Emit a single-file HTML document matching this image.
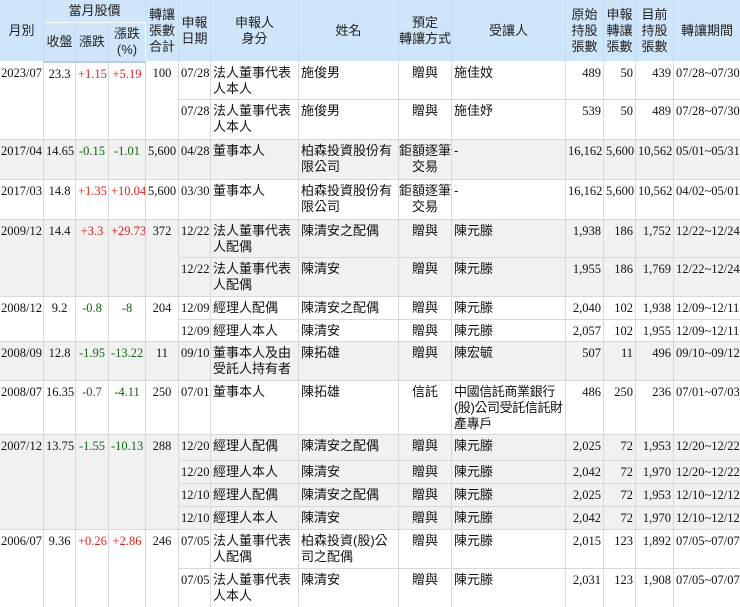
<!DOCTYPE html>
<html><head><meta charset="utf-8"><style>
html,body{margin:0;padding:0;background:#fff;width:740px;height:607px;overflow:hidden}
table{border-collapse:collapse;table-layout:fixed;width:741px;font-family:"Liberation Serif","Noto Sans CJK TC",serif;font-size:12.5px;color:#111;margin-top:-1px;margin-left:-1px}
td,th{border:1px solid #d8d8d8;padding:3px 2px 0 2px;line-height:16px;vertical-align:top;overflow:hidden;white-space:nowrap}
td.l{padding-left:1px;padding-right:0}
th{background:#cfe5fa;font-family:"Liberation Sans","Noto Sans CJK TC",sans-serif;font-size:13px;font-weight:normal;vertical-align:middle;text-align:center;border-color:#fff #c8daea #fff #fff;padding:0;color:#222}
thead tr:last-child th{border-bottom:2px solid #b8cde0}
.c{text-align:center}.r{text-align:right}.l{text-align:left}
.s{font-family:"Liberation Sans","Noto Sans CJK TC",sans-serif;font-size:13px;white-space:normal}
td.c.s{padding-left:0;padding-right:0}
td.nw{white-space:nowrap;letter-spacing:-0.4px}
.up{color:#d22}.dn{color:#161}
.g td{background:#f1f1f1}
</style></head><body>
<table>
<colgroup><col style="width:44px"><col style="width:32px"><col style="width:33px"><col style="width:37px"><col style="width:33px"><col style="width:32px"><col style="width:88px"><col style="width:100px"><col style="width:53px"><col style="width:114px"><col style="width:38px"><col style="width:32px"><col style="width:38px"><col style="width:67px"></colgroup>
<thead>
<tr style="height:23px"><th rowspan="2">月別</th><th colspan="3">當月股價</th><th rowspan="2">轉讓<br>張數<br>合計</th><th rowspan="2">申報<br>日期</th><th rowspan="2">申報人<br>身分</th><th rowspan="2">姓名</th><th rowspan="2">預定<br>轉讓方式</th><th rowspan="2">受讓人</th><th rowspan="2">原始<br>持股<br>張數</th><th rowspan="2">申報<br>轉讓<br>張數</th><th rowspan="2">目前<br>持股<br>張數</th><th rowspan="2">轉讓期間</th></tr>
<tr style="height:39px"><th>收盤</th><th>漲跌</th><th>漲跌<br>(%)</th></tr>
</thead>
<tbody>
<tr style="height:38px"><td rowspan="2" class="l">2023/07</td><td rowspan="2" class="c">23.3</td><td rowspan="2" class="c up">+1.15</td><td rowspan="2" class="c up">+5.19</td><td rowspan="2" class="c">100</td><td>07/28</td><td class="s">法人董事代表人本人</td><td class="s">施俊男</td><td class="s c">贈與</td><td class="s">施佳妏</td><td class="r">489</td><td class="r">50</td><td class="r">439</td><td class="r">07/28~07/30</td></tr>
<tr style="height:40px"><td>07/28</td><td class="s">法人董事代表人本人</td><td class="s">施俊男</td><td class="s c">贈與</td><td class="s">施佳妤</td><td class="r">539</td><td class="r">50</td><td class="r">489</td><td class="r">07/28~07/30</td></tr>
<tr class="g" style="height:40px"><td class="l">2017/04</td><td class="c">14.65</td><td class="c dn">-0.15</td><td class="c dn">-1.01</td><td class="c">5,600</td><td>04/28</td><td class="s">董事本人</td><td class="s">柏森投資股份有限公司</td><td class="s c">鉅額逐筆<br>交易</td><td class="s">-</td><td class="r">16,162</td><td class="r">5,600</td><td class="r">10,562</td><td class="r">05/01~05/31</td></tr>
<tr style="height:40px"><td class="l">2017/03</td><td class="c">14.8</td><td class="c up">+1.35</td><td class="c up">+10.04</td><td class="c">5,600</td><td>03/30</td><td class="s">董事本人</td><td class="s">柏森投資股份有限公司</td><td class="s c">鉅額逐筆<br>交易</td><td class="s">-</td><td class="r">16,162</td><td class="r">5,600</td><td class="r">10,562</td><td class="r">04/02~05/01</td></tr>
<tr class="g" style="height:38px"><td rowspan="2" class="l">2009/12</td><td rowspan="2" class="c">14.4</td><td rowspan="2" class="c up">+3.3</td><td rowspan="2" class="c up">+29.73</td><td rowspan="2" class="c">372</td><td>12/22</td><td class="s">法人董事代表人配偶</td><td class="s">陳清安之配偶</td><td class="s c">贈與</td><td class="s">陳元滕</td><td class="r">1,938</td><td class="r">186</td><td class="r">1,752</td><td class="r">12/22~12/24</td></tr>
<tr class="g" style="height:39px"><td>12/22</td><td class="s">法人董事代表人配偶</td><td class="s">陳清安</td><td class="s c">贈與</td><td class="s">陳元滕</td><td class="r">1,955</td><td class="r">186</td><td class="r">1,769</td><td class="r">12/22~12/24</td></tr>
<tr style="height:23px"><td rowspan="2" class="l">2008/12</td><td rowspan="2" class="c">9.2</td><td rowspan="2" class="c dn">-0.8</td><td rowspan="2" class="c dn">-8</td><td rowspan="2" class="c">204</td><td>12/09</td><td class="s">經理人配偶</td><td class="s">陳清安之配偶</td><td class="s c">贈與</td><td class="s">陳元滕</td><td class="r">2,040</td><td class="r">102</td><td class="r">1,938</td><td class="r">12/09~12/11</td></tr>
<tr style="height:22px"><td>12/09</td><td class="s">經理人本人</td><td class="s">陳清安</td><td class="s c">贈與</td><td class="s">陳元滕</td><td class="r">2,057</td><td class="r">102</td><td class="r">1,955</td><td class="r">12/09~12/11</td></tr>
<tr class="g" style="height:39px"><td class="l">2008/09</td><td class="c">12.8</td><td class="c dn">-1.95</td><td class="c dn">-13.22</td><td class="c">11</td><td>09/10</td><td class="s">董事本人及由受託人持有者</td><td class="s">陳拓雄</td><td class="s c">贈與</td><td class="s">陳宏毓</td><td class="r">507</td><td class="r">11</td><td class="r">496</td><td class="r">09/10~09/12</td></tr>
<tr style="height:54px"><td class="l">2008/07</td><td class="c">16.35</td><td class="c dn">-0.7</td><td class="c dn">-4.11</td><td class="c">250</td><td>07/01</td><td class="s">董事本人</td><td class="s">陳拓雄</td><td class="s c">信託</td><td class="s nw">中國信託商業銀行<br>(股)公司受託信託財<br>產專戶</td><td class="r">486</td><td class="r">250</td><td class="r">236</td><td class="r">07/01~07/03</td></tr>
<tr class="g" style="height:26px"><td rowspan="4" class="l">2007/12</td><td rowspan="4" class="c">13.75</td><td rowspan="4" class="c dn">-1.55</td><td rowspan="4" class="c dn">-10.13</td><td rowspan="4" class="c">288</td><td>12/20</td><td class="s">經理人配偶</td><td class="s">陳清安之配偶</td><td class="s c">贈與</td><td class="s">陳元滕</td><td class="r">2,025</td><td class="r">72</td><td class="r">1,953</td><td class="r">12/20~12/22</td></tr>
<tr class="g" style="height:23px"><td>12/20</td><td class="s">經理人本人</td><td class="s">陳清安</td><td class="s c">贈與</td><td class="s">陳元滕</td><td class="r">2,042</td><td class="r">72</td><td class="r">1,970</td><td class="r">12/20~12/22</td></tr>
<tr class="g" style="height:23px"><td>12/10</td><td class="s">經理人配偶</td><td class="s">陳清安之配偶</td><td class="s c">贈與</td><td class="s">陳元滕</td><td class="r">2,025</td><td class="r">72</td><td class="r">1,953</td><td class="r">12/10~12/12</td></tr>
<tr class="g" style="height:23px"><td>12/10</td><td class="s">經理人本人</td><td class="s">陳清安</td><td class="s c">贈與</td><td class="s">陳元滕</td><td class="r">2,042</td><td class="r">72</td><td class="r">1,970</td><td class="r">12/10~12/12</td></tr>
<tr style="height:39px"><td rowspan="2" class="l">2006/07</td><td rowspan="2" class="c">9.36</td><td rowspan="2" class="c up">+0.26</td><td rowspan="2" class="c up">+2.86</td><td rowspan="2" class="c">246</td><td>07/05</td><td class="s">法人董事代表人配偶</td><td class="s">柏森投資(股)公司之配偶</td><td class="s c">贈與</td><td class="s">陳元滕</td><td class="r">2,015</td><td class="r">123</td><td class="r">1,892</td><td class="r">07/05~07/07</td></tr>
<tr style="height:39px"><td>07/05</td><td class="s">法人董事代表人本人</td><td class="s">陳清安</td><td class="s c">贈與</td><td class="s">陳元滕</td><td class="r">2,031</td><td class="r">123</td><td class="r">1,908</td><td class="r">07/05~07/07</td></tr>
</tbody></table>
</body></html>
